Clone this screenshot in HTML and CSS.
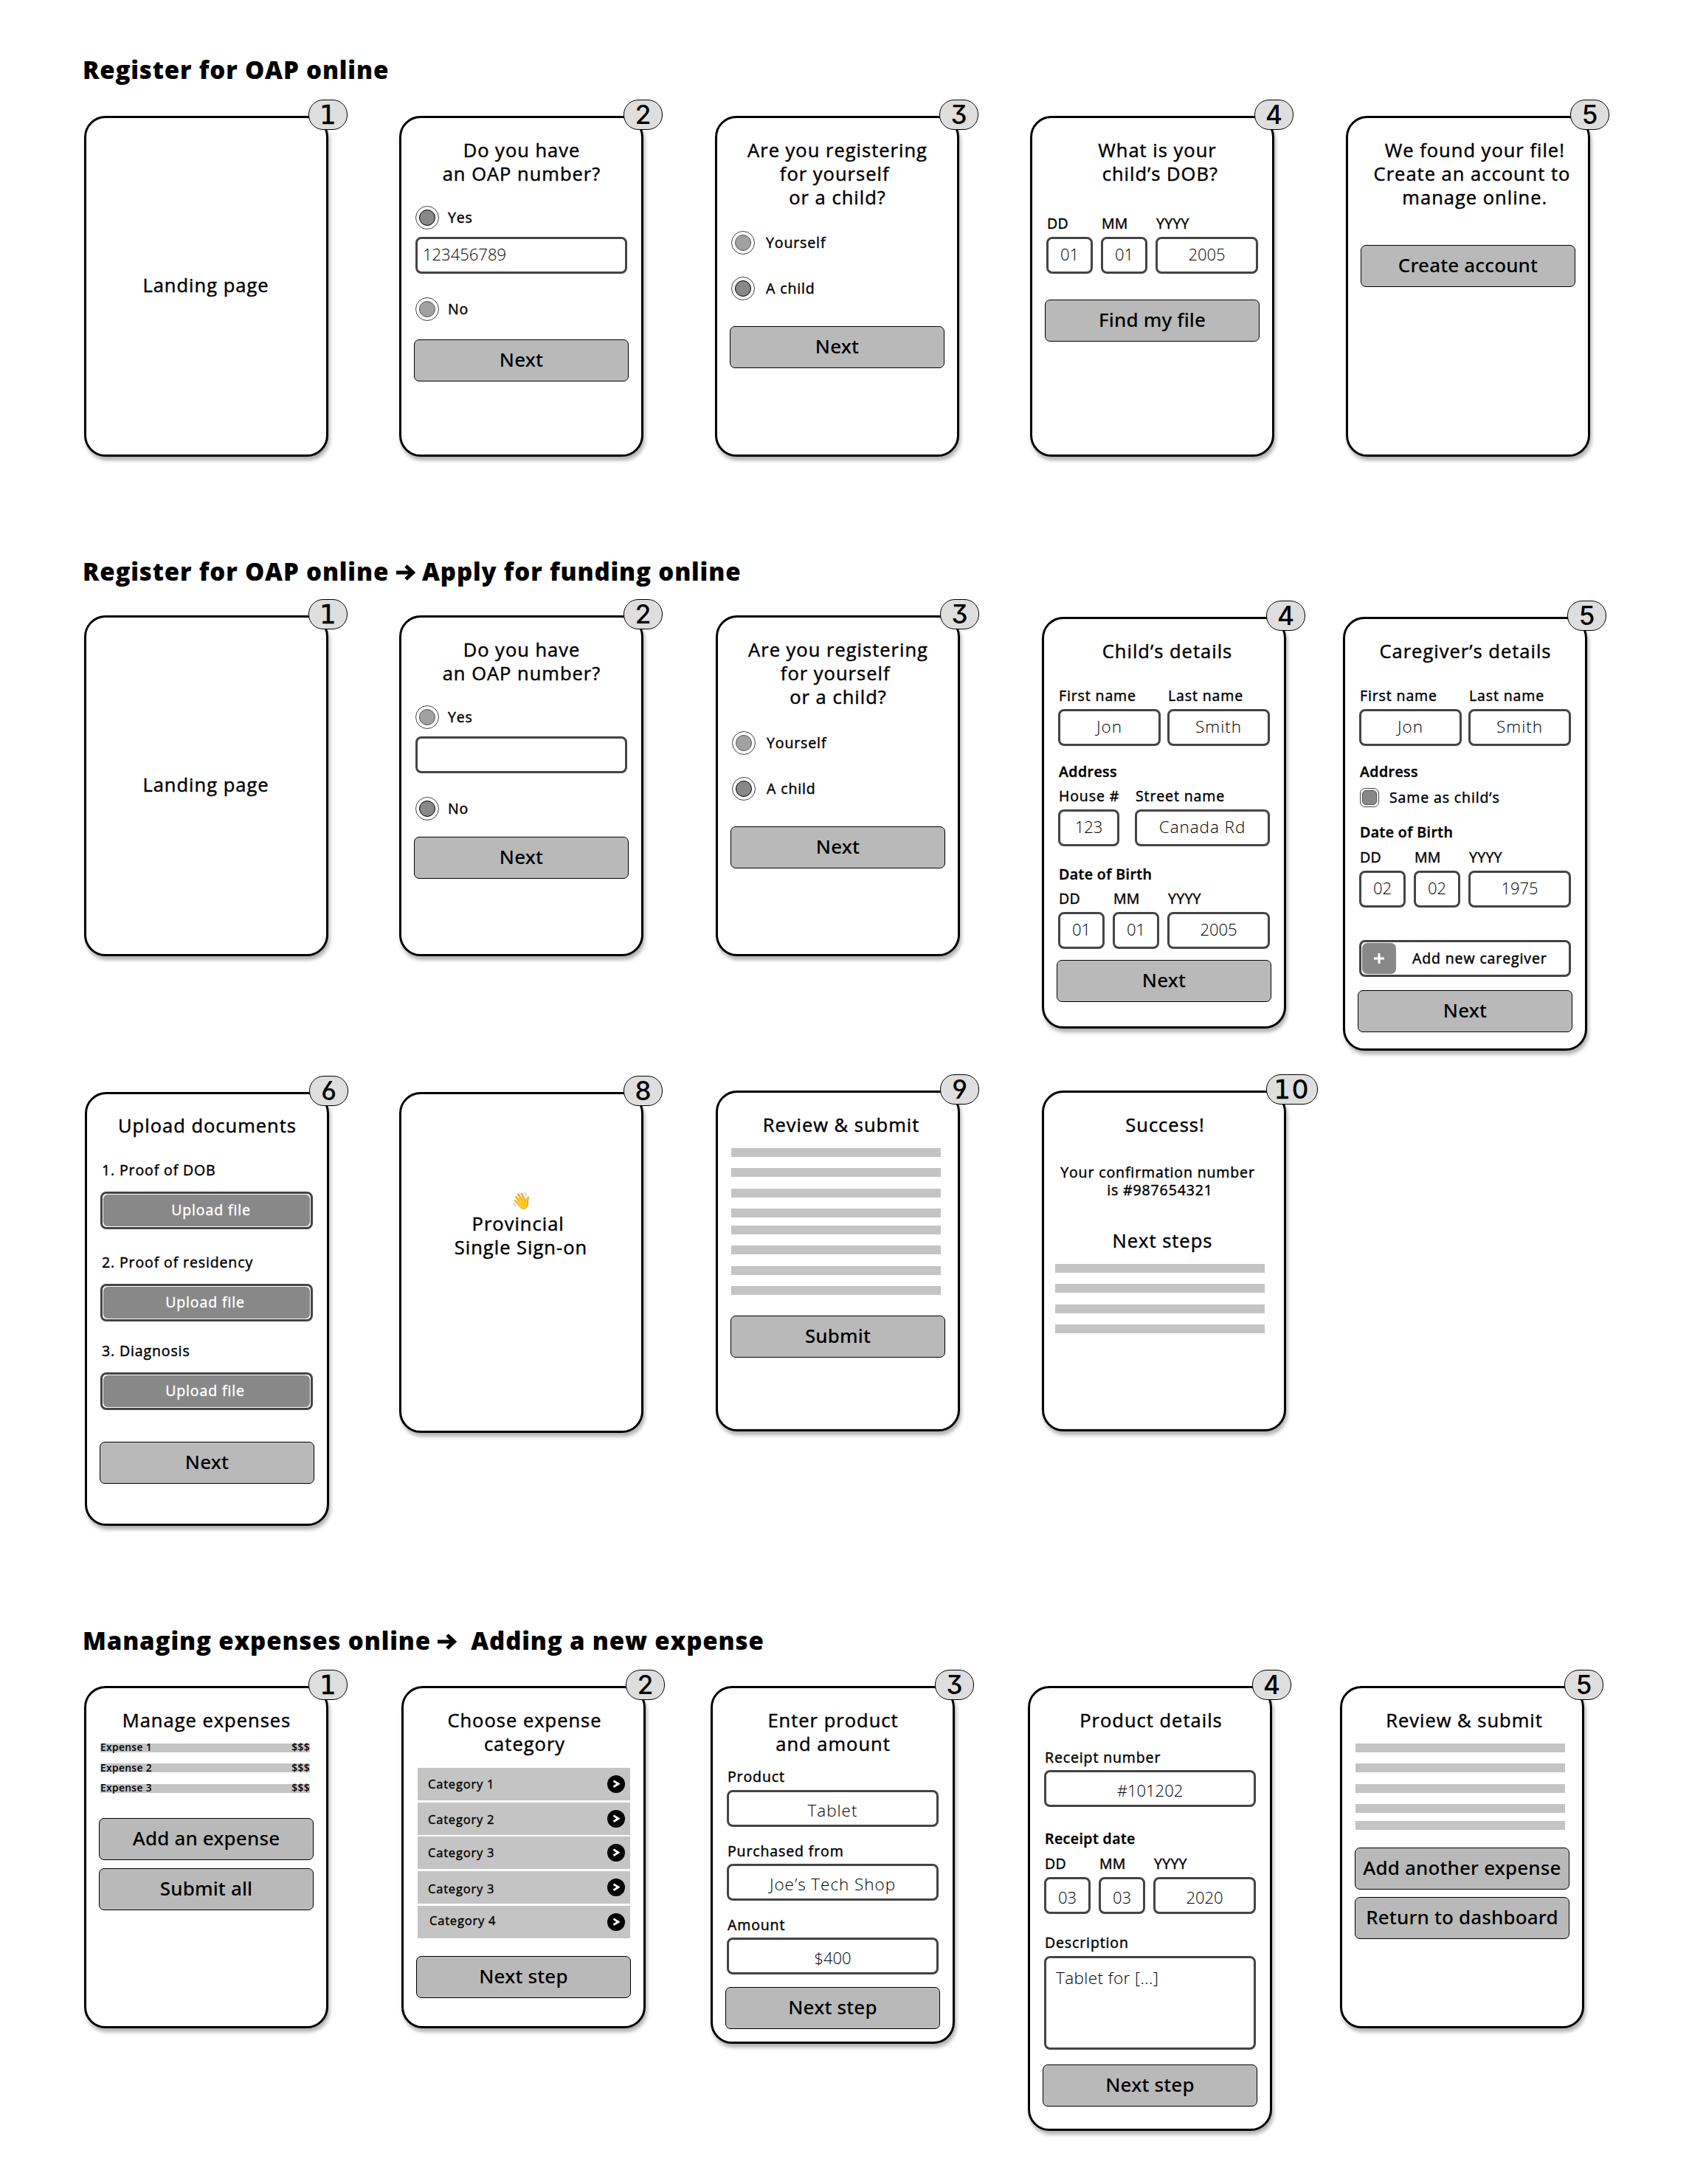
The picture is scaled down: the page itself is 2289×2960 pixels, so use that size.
FILE: index.html
```html
<!DOCTYPE html>
<html lang="en">
<head>
<meta charset="utf-8">
<title>OAP online flows</title>
<link rel="stylesheet" href="styles.css">
</head>
<body>
<main class="board">

<h2 class="flow-title">Register for OAP online</h2>
<section class="row row-1">
  <article class="card">
    <span class="badge"><i>1</i></span>
    <h3 class="title mt-183 left-1">Landing page</h3>
  </article>
  <article class="card">
    <span class="badge">2</span>
    <h3 class="title">Do you have<br>an OAP number?</h3>
    <div class="opt mt-28"><span class="radio on"></span>Yes</div>
    <div class="input start num mt-10">123456789</div>
    <div class="opt mt-32"><span class="radio"></span>No</div>
    <div class="btn mt-25">Next</div>
  </article>
  <article class="card">
    <span class="badge">3</span>
    <h3 class="title">Are you registering<br>for yourself&nbsp;<br>or a child?</h3>
    <div class="opt wide mt-30"><span class="radio"></span>Yourself</div>
    <div class="opt wide mt-30"><span class="radio on"></span>A child</div>
    <div class="btn mt-35">Next</div>
  </article>
  <article class="card">
    <span class="badge">4</span>
    <h3 class="title right-7">What is your<br>&nbsp;child’s DOB?</h3>
    <div class="date labels mt-40"><span>DD</span><span>MM</span><span>YYYY</span></div>
    <div class="date mt-6"><div class="input num">01</div><div class="input num">01</div><div class="input num">2005</div></div>
    <div class="btn mt-35">Find my file</div>
  </article>
  <article class="card">
    <span class="badge">5</span>
    <h3 class="title right-5">&nbsp;We found your file!<br>Create an account to<br>&nbsp;manage online.</h3>
    <div class="btn mt-49">Create account</div>
  </article>
</section>

<h2 class="flow-title next">Register for OAP online <svg class="arrow" viewBox="0 0 26 22"><path d="M0 11H22M13 2L22.5 11L13 20"/></svg> Apply for funding online</h2>
<section class="row row-2">
  <article class="card">
    <span class="badge"><i>1</i></span>
    <h3 class="title mt-183 left-1">Landing page</h3>
  </article>
  <article class="card">
    <span class="badge">2</span>
    <h3 class="title">Do you have<br>an OAP number?</h3>
    <div class="opt mt-28"><span class="radio"></span>Yes</div>
    <div class="input mt-10"></div>
    <div class="opt mt-32"><span class="radio on"></span>No</div>
    <div class="btn mt-22">Next</div>
  </article>
  <article class="card">
    <span class="badge">3</span>
    <h3 class="title">Are you registering<br>for yourself&nbsp;<br>or a child?</h3>
    <div class="opt wide mt-31"><span class="radio"></span>Yourself</div>
    <div class="opt wide mt-30"><span class="radio on"></span>A child</div>
    <div class="btn mt-35">Next</div>
  </article>
  <article class="card tall-a low">
    <span class="badge">4</span>
    <h3 class="title right-4">Child’s details</h3>
    <div class="pair labels mt-33"><span>First name</span><span>Last name</span></div>
    <div class="pair mt-6"><div class="input">Jon</div><div class="input">Smith</div></div>
    <div class="label strong mt-23">Address</div>
    <div class="street labels mt-9"><span>House #</span><span>Street name</span></div>
    <div class="street mt-6"><div class="input num">123</div><div class="input">Canada Rd</div></div>
    <div class="label strong mt-26">Date of Birth</div>
    <div class="date labels mt-9"><span>DD</span><span>MM</span><span>YYYY</span></div>
    <div class="date mt-6"><div class="input num">01</div><div class="input num">01</div><div class="input num">2005</div></div>
    <div class="btn mt-15">Next</div>
  </article>
  <article class="card tall-b low">
    <span class="badge">5</span>
    <h3 class="title">Caregiver’s details</h3>
    <div class="pair labels mt-33"><span>First name</span><span>Last name</span></div>
    <div class="pair mt-6"><div class="input">Jon</div><div class="input">Smith</div></div>
    <div class="label strong mt-23">Address</div>
    <div class="check mt-10"><span class="box"></span>Same as child’s</div>
    <div class="label strong mt-22">Date of Birth</div>
    <div class="date labels mt-10"><span>DD</span><span>MM</span><span>YYYY</span></div>
    <div class="date mt-6"><div class="input num">02</div><div class="input num">02</div><div class="input num">1975</div></div>
    <div class="add mt-44"><span class="plus"><svg viewBox="0 0 14 14"><path d="M7 0V14M0 7H14"/></svg></span>Add new caregiver</div>
    <div class="btn mt-18">Next</div>
  </article>
</section>

<section class="row row-3">
  <article class="card tall-b low">
    <span class="badge">6</span>
    <h3 class="title">Upload documents</h3>
    <div class="label mt-33">1. Proof of DOB</div>
    <div class="upload off mt-17"><span>Upload file</span></div>
    <div class="label mt-33">2. Proof of residency</div>
    <div class="upload mt-17"><span>Upload file</span></div>
    <div class="label mt-28">3. Diagnosis</div>
    <div class="upload mt-17"><span>Upload file</span></div>
    <div class="btn mt-43">Next</div>
  </article>
  <article class="card low">
    <span class="badge">8</span>
    <h3 class="title mt-100 left-1"><span class="emoji">👋</span><br>Provincial&nbsp;<br>Single Sign-on</h3>
  </article>
  <article class="card">
    <span class="badge">9</span>
    <h3 class="title right-4">Review &amp; submit</h3>
    <div class="bars mt-16"><b></b><b></b><b></b><b></b><b class="tight"></b><b></b><b></b><b></b></div>
    <div class="btn mt-28">Submit</div>
  </article>
  <article class="card">
    <span class="badge two"><i>1</i>0</span>
    <h3 class="title right-1">Success!</h3>
    <p class="note mt-37">Your confirmation number<br>&nbsp;is #987654321</p>
    <h3 class="title left-3 mt-40">Next steps</h3>
    <div class="bars in mt-16"><b></b><b></b><b></b><b></b></div>
  </article>
</section>

<h2 class="flow-title next">Managing expenses online <svg class="arrow" viewBox="0 0 26 22"><path d="M0 11H22M13 2L22.5 11L13 20"/></svg> &nbsp;Adding a new expense</h2>
<section class="row row-4">
  <article class="card">
    <span class="badge"><i>1</i></span>
    <h3 class="title">Manage expenses</h3>
    <div class="expenses mt-16">
      <div><span>Expense 1</span><span>$$$</span></div>
      <div class="drop"><span>Expense 2</span><span>$$$</span></div>
      <div><span>Expense 3</span><span>$$$</span></div>
    </div>
    <div class="btn mt-34">Add an expense</div>
    <div class="btn mt-11">Submit all</div>
  </article>
  <article class="card">
    <span class="badge">2</span>
    <h3 class="title right-1">Choose expense<br>category</h3>
    <div class="cats mt-17">
      <div><span>Category 1</span><svg viewBox="0 0 24 24"><circle cx="12" cy="12" r="12"/><path d="M8.5 7.6L15 11.7L8.5 15.8"/></svg></div>
      <div><span class="d1">Category 2</span><svg viewBox="0 0 24 24"><circle cx="12" cy="12" r="12"/><path d="M8.5 7.6L15 11.7L8.5 15.8"/></svg></div>
      <div><span>Category 3</span><svg viewBox="0 0 24 24"><circle cx="12" cy="12" r="12"/><path d="M8.5 7.6L15 11.7L8.5 15.8"/></svg></div>
      <div><span class="d2">Category 3</span><svg viewBox="0 0 24 24"><circle cx="12" cy="12" r="12"/><path d="M8.5 7.6L15 11.7L8.5 15.8"/></svg></div>
      <div><span class="u1">Category 4</span><svg viewBox="0 0 24 24"><circle cx="12" cy="12" r="12"/><path d="M8.5 7.6L15 11.7L8.5 15.8"/></svg></div>
    </div>
    <div class="btn mt-24">Next step</div>
  </article>
  <article class="card mid deep">
    <span class="badge">3</span>
    <h3 class="title">Enter product<br>and amount</h3>
    <div class="label mt-17">Product</div>
    <div class="input mt-6">Tablet</div>
    <div class="label mt-21">Purchased from</div>
    <div class="input mt-5">Joe’s Tech Shop</div>
    <div class="label mt-21">Amount</div>
    <div class="input num mt-5">$400</div>
    <div class="btn mt-17">Next step</div>
  </article>
  <article class="card tall-c deep">
    <span class="badge">4</span>
    <h3 class="title right-1">Product details</h3>
    <div class="label mt-23">Receipt number</div>
    <div class="input num mt-5">#101202</div>
    <div class="label strong mt-31">Receipt date</div>
    <div class="date labels mt-10"><span>DD</span><span>MM</span><span>YYYY</span></div>
    <div class="date mt-6"><div class="input num">03</div><div class="input num">03</div><div class="input num">2020</div></div>
    <div class="label mt-27">Description</div>
    <div class="input area mt-6">Tablet for [...]</div>
    <div class="btn mt-20">Next step</div>
  </article>
  <article class="card">
    <span class="badge">5</span>
    <h3 class="title right-3">Review &amp; submit</h3>
    <div class="bars mt-16"><b></b><b></b><b></b><b></b><b class="tight"></b></div>
    <div class="btn mt-24">Add another expense</div>
    <div class="btn mt-10">Return to dashboard</div>
  </article>
</section>

</main>
</body>
</html>
```
FILE: styles.css
```css
* { box-sizing: border-box; }
body {
  margin: 0;
  background: #fff;
  color: #000;
  font-family: "Open Sans", sans-serif;
}
.board { width: 2289px; height: 2960px; padding-top: 73px; overflow: hidden; }

.flow-title {
  margin: 0 0 0 112px;
  font-size: 33px;
  font-weight: 800;
  line-height: 44px;
  letter-spacing: .85px;
  white-space: nowrap;
}
.flow-title.next { margin-top: 134px; }
.arrow {
  width: 26px;
  height: 22px;
  fill: none;
  stroke: #000;
  stroke-width: 5;
}

/* Screens in a row */
.row { display: grid; align-items: start; padding-left: 114px; }
.row-1 { margin-top: 40px; grid-template-columns: 427px 428px 427px 428px 331px; }
.row-2 { margin-top: 37px; grid-template-columns: 427px 429px 442px 408px 331px; }
.row-3 { margin-top: 54px; padding-left: 115px; grid-template-columns: 426px 429px 442px 331px; }
.row-4 { margin-top: 39px; grid-template-columns: 430px 419px 430px 423px 331px; }

.card {
  position: relative;
  display: flex;
  flex-direction: column;
  width: 331px;
  height: 462px;
  padding: 27px 17px 0 18px;
  border: 3px solid #000;
  border-radius: 29px;
  background: #fff;
  box-shadow: 2px 5px 5px rgba(0, 0, 0, .3);
}
.row-4 .card { height: 464px; }
.card.low { margin-top: 2px; }
.row-3 .card.low { padding-top: 26px; }
.card.tall-a { height: 558px; }
.card.tall-b { height: 588px; }
.row-4 .card.mid { height: 485px; }
.row-4 .card.tall-c { height: 603px; }

.badge {
  position: absolute;
  top: -25px;
  left: 301px;
  width: 53px;
  height: 41px;
  border: 1.5px solid #000;
  border-radius: 20px;
  background: #dedede;
  font: 500 35px/39px Inter, sans-serif;
  font-feature-settings: "cv03", "cv04", "cv09";
  text-align: center;
}
.badge i { font: 400 35px/36px "DejaVu Sans", sans-serif; -webkit-text-stroke: .6px #000; }
.badge.two { width: 70px; letter-spacing: 2px; }

.title {
  margin: 0 -10px;
  font-size: 25.5px;
  font-weight: 400;
  -webkit-text-stroke: .45px #000;
  line-height: 32px;
  letter-spacing: 1px;
  text-align: center;
  white-space: nowrap;
}
.title.mt-183 { margin-top: 183px; }
.title.mt-100 { margin-top: 100px; }
.title.mt-40 { margin-top: 40px; }
.emoji { font-size: 22px; letter-spacing: 0; -webkit-text-stroke: 0; }
.right-1 { padding-left: 2px; }
.right-3 { padding-left: 5px; }
.right-4 { padding-left: 8px; }
.right-5 { padding-left: 10px; }
.right-7 { padding-left: 13px; }
.left-1 { padding-right: 2px; }
.left-3 { padding-right: 5px; }

.label, .labels, .opt, .check, .add, .note, .upload {
  font-size: 19.5px;
  font-weight: 400;
  -webkit-text-stroke: .45px currentColor;
  line-height: 24px;
  letter-spacing: .88px;
  white-space: nowrap;
}
.label { padding-left: 2px; }
.label.strong { font-weight: 600; letter-spacing: .45px; }
.labels > span { padding-left: 1px; }
.date.labels > span { letter-spacing: .3px; }
.note { margin-bottom: 0; text-align: center; padding-right: 18px; }

.date, .pair, .street { display: grid; width: 287px; margin-left: 1px; }
.date { grid-template-columns: 63px 63px 139px; column-gap: 11px; }
.pair { grid-template-columns: 139px 139px; column-gap: 9px; }
.street { grid-template-columns: 83px 183px; column-gap: 21px; }

.opt { display: flex; align-items: center; gap: 12px; height: 32px; padding-left: 1px; }
.opt.wide { gap: 15px; }
.radio {
  display: grid;
  place-items: center;
  width: 32px;
  height: 32px;
  border: 1.2px solid #444;
  border-radius: 50%;
}
.radio::after {
  content: "";
  width: 20px;
  height: 20px;
  border: 1.5px solid #555;
  border-radius: 50%;
  background: #a1a1a1;
}
.radio.on::after { border-color: #000; background: #888; }

.input {
  display: flex;
  align-items: center;
  justify-content: center;
  height: 50px;
  padding-bottom: 4px;
  border: 3px solid #444;
  border-radius: 8px;
  font-size: 22.5px;
  font-weight: 300;
  letter-spacing: .95px;
  white-space: nowrap;
}
.card > .input { width: 287px; margin-left: 1px; }
.input.num { font-size: 22px; letter-spacing: 0; }
.input.start { justify-content: flex-start; padding-left: 7px; }
.deep .input { padding: 4px 0 0; }
.deep .input.area {
  align-items: flex-start;
  justify-content: flex-start;
  height: 127px;
  padding: 11px 0 0 13px;
  line-height: 32px;
  letter-spacing: .4px;
}

.check { display: flex; align-items: center; gap: 14px; height: 26px; margin-left: 2px; }
.box {
  display: grid;
  width: 26px;
  height: 26px;
  padding: 2px;
  border: 1.2px solid #444;
  border-radius: 7px;
}
.box::after { content: ""; border: 1px solid #555; border-radius: 5px; background: #888; }

.add {
  display: flex;
  align-items: center;
  width: 287px;
  height: 50px;
  margin-left: 1px;
  padding-left: 1px;
  border: 3px solid #444;
  border-radius: 8px;
  line-height: 28px;
}
.plus {
  display: grid;
  place-items: center;
  width: 46px;
  height: 42px;
  margin-right: 22px;
  border-radius: 7px;
  background: #888;
}
.plus svg { width: 14px; height: 14px; stroke: #fff; stroke-width: 3; }

.upload {
  width: 288px;
  height: 51px;
  padding: 1px;
  border: 3px solid #444;
  border-radius: 8px;
  color: #fff;
}
.upload span {
  display: block;
  height: 43px;
  padding-right: 4px;
  border-radius: 6px;
  background: #888;
  line-height: 42px;
  text-align: center;
}
.upload.off span { padding: 0 0 0 12px; }

.btn {
  flex: none;
  width: 291px;
  height: 57px;
  margin-left: -1px;
  border: 1.5px solid #000;
  border-radius: 7px;
  background: #b9b9b9;
  font: 500 26px/52px "Noto Sans", sans-serif;
  letter-spacing: .15px;
  text-align: center;
  white-space: nowrap;
}

.bars { display: grid; gap: 15.3px; width: 284px; }
.bars b { height: 12px; background: #c4c4c4; }
.bars .tight { margin-top: -4px; }
.bars.in { margin-left: -3px; }

.expenses { display: grid; gap: 15.4px; width: 284px; margin-left: 1px; }
.expenses div {
  display: flex;
  justify-content: space-between;
  height: 12px;
  background: #c4c4c4;
  font-size: 13.8px;
  font-weight: 600;
  line-height: 9px;
  letter-spacing: .35px;
}
.expenses .drop { line-height: 11px; }

.cats { display: grid; gap: 2.7px; width: 288px; margin-left: 1px; }
.cats div {
  display: flex;
  align-items: center;
  justify-content: space-between;
  height: 44px;
  padding: 0 7px 0 14px;
  background: #c4c4c4;
  font-size: 16.5px;
  -webkit-text-stroke: .4px #000;
  letter-spacing: .8px;
  line-height: 24px;
}
.cats .d1 { margin-top: 2px; }
.cats .d2 { margin-top: 4px; }
.cats .u1 { margin: 0 0 4px 2px; }
.cats svg { width: 24px; height: 24px; }
.cats path { fill: none; stroke: #fff; stroke-width: 2.8; }

.mt-5 { margin-top: 5px; }
.mt-6 { margin-top: 6px; }
.mt-9 { margin-top: 9px; }
.mt-10 { margin-top: 10px; }
.mt-11 { margin-top: 11px; }
.mt-15 { margin-top: 15px; }
.mt-16 { margin-top: 16px; }
.mt-17 { margin-top: 17px; }
.mt-18 { margin-top: 18px; }
.mt-20 { margin-top: 20px; }
.mt-21 { margin-top: 21px; }
.mt-22 { margin-top: 22px; }
.mt-23 { margin-top: 23px; }
.mt-24 { margin-top: 24px; }
.mt-25 { margin-top: 25px; }
.mt-26 { margin-top: 26px; }
.mt-27 { margin-top: 27px; }
.mt-28 { margin-top: 28px; }
.mt-30 { margin-top: 30px; }
.mt-31 { margin-top: 31px; }
.mt-32 { margin-top: 32px; }
.mt-33 { margin-top: 33px; }
.mt-34 { margin-top: 34px; }
.mt-35 { margin-top: 35px; }
.mt-37 { margin-top: 37px; }
.mt-40 { margin-top: 40px; }
.mt-43 { margin-top: 43px; }
.mt-44 { margin-top: 44px; }
.mt-49 { margin-top: 49px; }
```
